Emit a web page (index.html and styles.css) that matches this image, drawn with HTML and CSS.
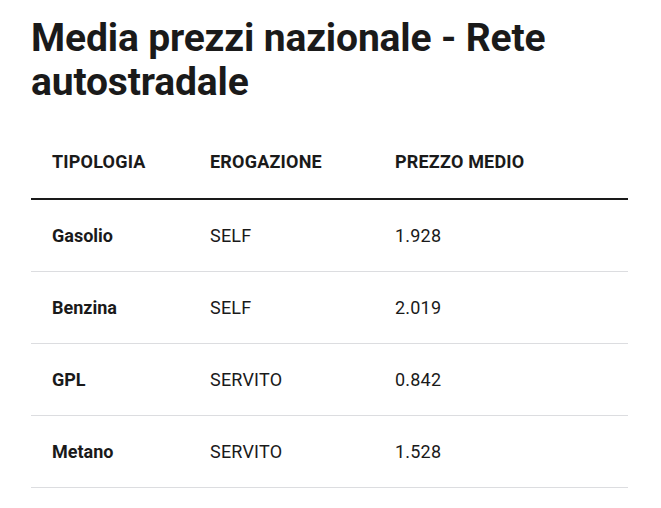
FILE: index.html
```html
<!DOCTYPE html>
<html lang="it">
<head>
<meta charset="utf-8">
<title>Media prezzi nazionale</title>
<link rel="stylesheet" href="styles.css">
</head>
<body>
<main class="page">
  <h2 class="title">Media prezzi nazionale - Rete autostradale</h2>
  <table class="prices">
    <thead>
      <tr>
        <th class="c1">TIPOLOGIA</th>
        <th class="c2">EROGAZIONE</th>
        <th class="c3">PREZZO MEDIO</th>
      </tr>
    </thead>
    <tbody>
      <tr><th class="c1">Gasolio</th><td class="c2">SELF</td><td class="c3">1.928</td></tr>
      <tr><th class="c1">Benzina</th><td class="c2">SELF</td><td class="c3">2.019</td></tr>
      <tr><th class="c1">GPL</th><td class="c2">SERVITO</td><td class="c3">0.842</td></tr>
      <tr><th class="c1">Metano</th><td class="c2">SERVITO</td><td class="c3">1.528</td></tr>
    </tbody>
  </table>
</main>
</body>
</html>
```
FILE: styles.css
```css
html, body {
  margin: 0;
  padding: 0;
  background: #ffffff;
}
body {
  font-family: Roboto, "Liberation Sans", sans-serif;
  color: #1a1a1a;
}
.page {
  width: 597px;
  padding: 16px 0 0 31px;
}
.title {
  margin: 0 0 27px 0;
  font-size: 39px;
  line-height: 44px;
  font-weight: 700;
  letter-spacing: -0.15px;
  color: #1a1a1a;
}
.prices {
  width: 597px;
  border-collapse: collapse;
  table-layout: fixed;
}
.prices th, .prices td {
  text-align: left;
  padding: 0 0 0 21px;
  font-size: 18px;
  color: #1a1a1a;
}
.prices thead th {
  height: 68px;
  font-weight: 700;
  vertical-align: top;
  padding-top: 20px;
  border-bottom: 2px solid #1a1a1a;
  box-sizing: border-box;
  letter-spacing: 0.2px;
}
.prices tbody th, .prices tbody td {
  height: 71px;
  border-bottom: 1px solid #dcdde0;
  vertical-align: middle;
}
.prices tbody th {
  font-weight: 700;
}
.prices tbody td {
  font-weight: 400;
  letter-spacing: 0.2px;
}
.c1 { width: 158px; }
.c2 { width: 185px; }
```
